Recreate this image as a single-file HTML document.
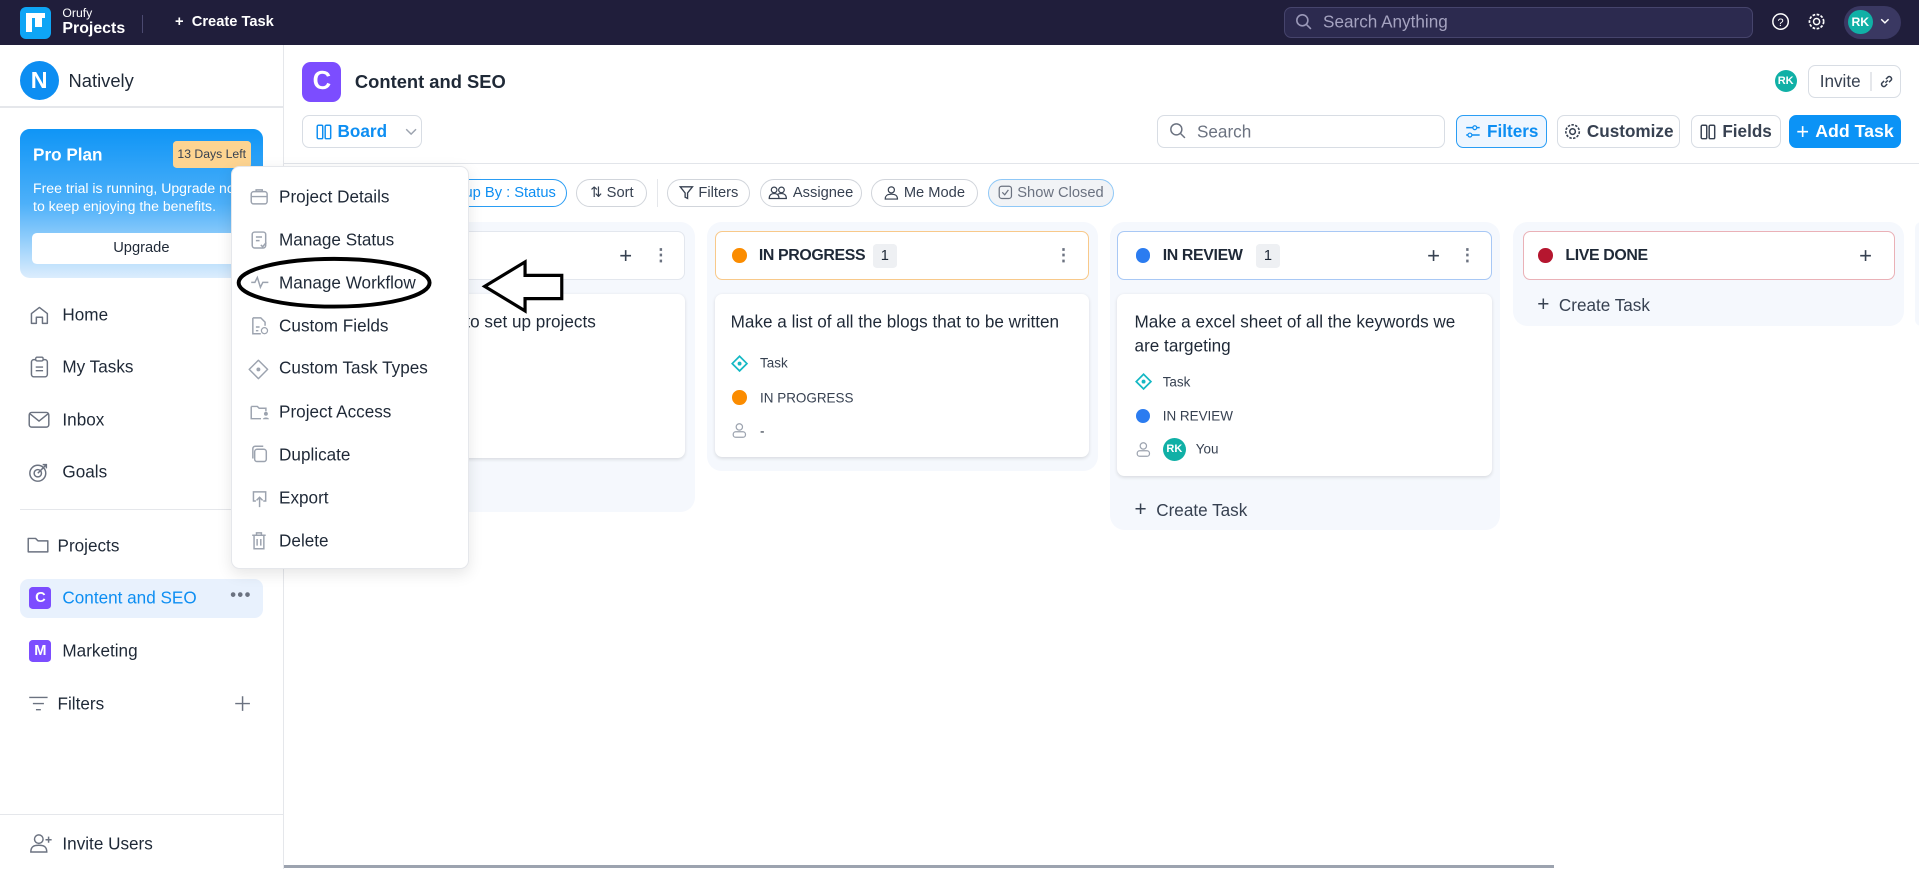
<!DOCTYPE html>
<html><head><meta charset="utf-8"><style>
*{box-sizing:border-box;margin:0;padding:0}
html,body{width:1919px;height:869px;overflow:hidden;background:#fff}
#w{zoom:1.2239;width:1568px;height:710px;position:relative;font-family:"Liberation Sans",sans-serif;color:#1f2937}
.a{position:absolute}
.t{position:absolute;white-space:nowrap;transform:translateY(-50%)}
.nav{left:0;top:0;width:1568px;height:37px;background:#201e3b}
.btn{position:absolute;border:1px solid #d8dde4;border-radius:6px;background:#fff;font-size:14px;display:flex;align-items:center;justify-content:center;gap:5px;font-weight:bold;color:#374151}
.chip{position:absolute;top:146px;height:23px;border:1px solid #d1d5db;border-radius:12px;font-size:12px;display:flex;align-items:center;justify-content:center;gap:4px;color:#374151;background:#fff}
.col{position:absolute;background:#f5f8fd;border-radius:12px;top:181px}
.hd{position:absolute;background:#fff;border-radius:6px;height:40px;top:189px;font-size:14px;font-weight:bold;color:#1f2937}
.card{position:absolute;background:#fff;border-radius:6px;box-shadow:0 1px 3px rgba(0,0,0,.12)}
.dot{position:absolute;width:12px;height:12px;border-radius:50%}
.cnt{position:absolute;background:#eef0f3;border-radius:3px;font-size:12px;width:20px;height:20px;text-align:center;line-height:20px;font-weight:normal}
.side{font-size:14px;color:#1f2937}
.mi{font-size:14px;color:#1f2937}
.hl{font-size:13px;font-weight:bold;letter-spacing:-0.3px}
svg{position:absolute;overflow:visible}
</style></head><body><div id="w">
<div class="a nav"></div>
<div class="a" style="left:16px;top:6px;width:26px;height:26px;background:#0ea5f5;border-radius:5px"></div>
<div class="a" style="left:21px;top:11px;width:16px;height:4px;background:#fff"></div>
<div class="a" style="left:21px;top:15px;width:5px;height:11px;background:#fff"></div>
<div class="a" style="left:29px;top:15px;width:5px;height:7px;background:#fff"></div>
<div class="t" style="left:51px;top:11px;font-size:10px;color:#fff">Orufy</div>
<div class="t" style="left:51px;top:24px;font-size:13px;color:#fff;font-weight:bold">Projects</div>
<div class="a" style="left:116px;top:12px;width:1px;height:15px;background:#4b4970"></div>
<div class="t" style="left:143px;top:18px;font-size:12px;color:#fff;font-weight:bold">+ &nbsp;Create Task</div>
<div class="a" style="left:1049px;top:6px;width:383px;height:25px;background:#2c2a4f;border:1px solid #46446c;border-radius:6px"></div>
<svg style="left:1058px;top:11px" width="14" height="14"><circle cx="6" cy="6" r="4.5" stroke="#9a98b8" fill="none" stroke-width="1.3"/><path d="M9.5 9.5L13 13" stroke="#9a98b8" stroke-width="1.3"/></svg>
<div class="t" style="left:1081px;top:18px;font-size:14px;color:#a5a3c0">Search Anything</div>
<svg style="left:1448px;top:11px" width="15" height="15"><circle cx="7" cy="7" r="6.3" stroke="#fff" fill="none" stroke-width="1.2"/><text x="7" y="10.5" font-size="9" fill="#fff" text-anchor="middle" font-family="Liberation Sans">?</text></svg>
<svg style="left:1477px;top:11px" width="15" height="15"><circle cx="7" cy="7" r="2.5" stroke="#fff" fill="none" stroke-width="1.2"/><circle cx="7" cy="7" r="5.8" stroke="#fff" fill="none" stroke-width="1.4" stroke-dasharray="2.2 1.2"/></svg>
<div class="a" style="left:1507px;top:5px;width:46px;height:27px;background:#3a3862;border-radius:14px"></div>
<div class="a" style="left:1510px;top:8px;width:20px;height:20px;border-radius:50%;background:#10b0a6;color:#fff;font-size:10px;font-weight:bold;text-align:center;line-height:20px">RK</div>
<svg style="left:1536px;top:15px" width="8" height="6"><path d="M1 1L4 4L7 1" stroke="#fff" fill="none" stroke-width="1.2"/></svg>

<!-- sidebar -->
<div class="a" style="left:231px;top:37px;width:1px;height:673px;background:#e5e7eb"></div>
<div class="a" style="left:16px;top:50px;width:32px;height:32px;border-radius:50%;background:#0d8ef2;color:#fff;font-weight:bold;font-size:19px;text-align:center;line-height:32px">N</div>
<div class="t side" style="left:56px;top:66px;font-size:15px">Natively</div>
<div class="a" style="left:0;top:87px;width:231px;height:1px;background:#e5e7eb"></div>
<div class="a" style="left:16px;top:105px;width:199px;height:122px;border-radius:8px;background:linear-gradient(180deg,#0f95f6 0%,#4db0f9 50%,#dcedfd 100%)"></div>
<div class="t" style="left:27px;top:127px;font-size:14px;color:#fff;font-weight:bold">Pro Plan</div>
<div class="a" style="left:141px;top:115px;width:64px;height:22px;background:#fdd491;border-radius:3px;font-size:10px;color:#374151;text-align:center;line-height:22px">13 Days Left</div>
<div class="t" style="left:27px;top:154px;font-size:11.5px;color:#fff">Free trial is running, Upgrade now</div>
<div class="t" style="left:27px;top:168px;font-size:11.5px;color:#fff">to keep enjoying the benefits.</div>
<div class="a" style="left:26px;top:190px;width:179px;height:26px;background:#fff;border-radius:4px;font-size:12px;text-align:center;line-height:26px;color:#1f2937">Upgrade</div>
<svg style="left:24px;top:249px" width="17" height="17"><path d="M2 15V7L8.5 2L15 7V15H11V10H6V15Z" stroke="#6b7280" fill="none" stroke-width="1.2" stroke-linejoin="round"/></svg>
<div class="t side" style="left:51px;top:257px">Home</div>
<svg style="left:24px;top:291px" width="17" height="18"><rect x="2" y="3" width="13" height="14" rx="2" stroke="#6b7280" fill="none" stroke-width="1.2"/><rect x="5.5" y="1" width="6" height="3" rx="1" stroke="#6b7280" fill="#fff" stroke-width="1.1"/><path d="M5.5 9H11.5M5.5 12H11.5" stroke="#6b7280" stroke-width="1.1"/></svg>
<div class="t side" style="left:51px;top:300px">My Tasks</div>
<svg style="left:23px;top:335px" width="18" height="15"><rect x="1" y="2" width="16" height="12" rx="2" stroke="#6b7280" fill="none" stroke-width="1.2"/><path d="M1.5 3L9 9L16.5 3" stroke="#6b7280" fill="none" stroke-width="1.2"/></svg>
<div class="t side" style="left:51px;top:343px">Inbox</div>
<svg style="left:23px;top:377px" width="18" height="18"><circle cx="8" cy="10" r="6.5" stroke="#6b7280" fill="none" stroke-width="1.2"/><circle cx="8" cy="10" r="3" stroke="#6b7280" fill="none" stroke-width="1.2"/><path d="M8 10L15 3M12 3H15V6" stroke="#6b7280" fill="none" stroke-width="1.2"/></svg>
<div class="t side" style="left:51px;top:386px">Goals</div>
<div class="a" style="left:16px;top:416px;width:199px;height:1px;background:#e5e7eb"></div>
<svg style="left:22px;top:438px" width="19" height="15"><path d="M1 2H7L9 4H17V13H1Z" stroke="#6b7280" fill="none" stroke-width="1.2" stroke-linejoin="round"/></svg>
<div class="t side" style="left:47px;top:446px">Projects</div>
<div class="a" style="left:16px;top:473px;width:199px;height:32px;background:#e8f1fd;border-radius:7px"></div>
<div class="a" style="left:24px;top:480px;width:18px;height:18px;background:#7c4dff;border-radius:3px;color:#fff;font-weight:bold;font-size:12px;text-align:center;line-height:18px">C</div>
<div class="t side" style="left:51px;top:489px;color:#0d8ef2">Content and SEO</div>
<div class="t" style="left:188px;top:486px;font-size:14px;color:#6b7280;letter-spacing:1px">•••</div>
<div class="a" style="left:24px;top:523px;width:18px;height:18px;background:#7c4dff;border-radius:3px;color:#fff;font-weight:bold;font-size:12px;text-align:center;line-height:18px">M</div>
<div class="t side" style="left:51px;top:532px">Marketing</div>
<svg style="left:23px;top:568px" width="17" height="14"><path d="M1 2H16M4 7H13M6.5 12H10.5" stroke="#6b7280" stroke-width="1.2"/></svg>
<div class="t side" style="left:47px;top:575px">Filters</div>
<svg style="left:191px;top:568px" width="14" height="14"><path d="M7 1V13M1 7H13" stroke="#6b7280" stroke-width="1.2"/></svg>
<div class="a" style="left:0;top:665px;width:231px;height:1px;background:#e5e7eb"></div>
<svg style="left:24px;top:681px" width="20" height="17"><circle cx="8" cy="5" r="3.5" stroke="#6b7280" fill="none" stroke-width="1.2"/><path d="M1.5 15.5C1.5 11 4 10 8 10C12 10 14.5 11 14.5 15.5Z" stroke="#6b7280" fill="none" stroke-width="1.2"/><path d="M16 3V8M13.5 5.5H18.5" stroke="#6b7280" stroke-width="1.2"/></svg>
<div class="t side" style="left:51px;top:690px">Invite Users</div>

<!-- main header -->
<div class="a" style="left:247px;top:51px;width:32px;height:32px;background:#7c4dff;border-radius:7px;color:#fff;font-weight:bold;font-size:21px;text-align:center;line-height:32px">C</div>
<div class="t" style="left:290px;top:67px;font-size:15px;font-weight:bold;color:#1f2937">Content and SEO</div>
<div class="a" style="left:1450px;top:57px;width:18px;height:18px;border-radius:50%;background:#10b0a6;color:#fff;font-size:9px;font-weight:bold;text-align:center;line-height:18px">RK</div>
<div class="btn" style="left:1477px;top:53px;width:76px;height:27px;font-weight:normal;justify-content:flex-start;padding-left:9px;font-size:14px">Invite<span style="width:1px;height:16px;background:#e5e7eb;margin-left:3px"></span><svg style="position:static" width="14" height="14"><path d="M6 8L8 6M5 6.5L3 8.5A2 2 0 0 0 5.5 11L7.5 9M6.5 5L8.5 3A2 2 0 0 1 11 5.5L9 7.5" stroke="#374151" fill="none" stroke-width="1.2"/></svg></div>

<div class="btn" style="left:247px;top:94px;width:98px;height:27px;color:#0d8ef2;justify-content:flex-start;padding-left:10px"><svg style="position:static" width="13" height="13"><rect x="1" y="1" width="4.5" height="11" rx="1" stroke="#0d8ef2" fill="none" stroke-width="1.2"/><rect x="7.5" y="1" width="4.5" height="11" rx="1" stroke="#0d8ef2" fill="none" stroke-width="1.2"/></svg>Board<svg style="position:static;margin-left:10px" width="10" height="6"><path d="M1 1L5 5L9 1" stroke="#9ca3af" fill="none" stroke-width="1.2"/></svg></div>
<div class="a" style="left:945px;top:94px;width:236px;height:27px;border:1px solid #d8dde4;border-radius:6px"></div>
<svg style="left:955px;top:100px" width="14" height="14"><circle cx="6" cy="6" r="4.5" stroke="#6b7280" fill="none" stroke-width="1.2"/><path d="M9.5 9.5L13 13" stroke="#6b7280" stroke-width="1.2"/></svg>
<div class="t" style="left:978px;top:108px;font-size:14px;color:#6b7280">Search</div>
<div class="btn" style="left:1190px;top:94px;width:74px;height:27px;background:#eef6ff;border-color:#2a9df4;color:#0d8ef2"><svg style="position:static" width="13" height="12"><path d="M1 3H12M1 9H12" stroke="#0d8ef2" stroke-width="1.2"/><circle cx="8" cy="3" r="1.6" fill="#eef6ff" stroke="#0d8ef2"/><circle cx="4" cy="9" r="1.6" fill="#eef6ff" stroke="#0d8ef2"/></svg>Filters</div>
<div class="btn" style="left:1272px;top:94px;width:101px;height:27px"><svg style="position:static" width="14" height="14"><circle cx="7" cy="7" r="2.3" stroke="#374151" fill="none" stroke-width="1.2"/><circle cx="7" cy="7" r="5.5" stroke="#374151" fill="none" stroke-width="1.3" stroke-dasharray="2 1.1"/></svg>Customize</div>
<div class="btn" style="left:1382px;top:94px;width:73px;height:27px"><svg style="position:static" width="13" height="13"><rect x="1" y="1" width="4.5" height="11" rx="1" stroke="#374151" fill="none" stroke-width="1.2"/><rect x="7.5" y="1" width="4.5" height="11" rx="1" stroke="#374151" fill="none" stroke-width="1.2"/></svg>Fields</div>
<div class="btn" style="left:1462px;top:94px;width:91px;height:27px;background:#0b93f6;border-color:#0b93f6;color:#fff;font-size:14.5px"><span style="font-size:18px;font-weight:normal">+</span>Add Task</div>
<div class="a" style="left:232px;top:133px;width:1336px;height:1px;background:#e2e5ea"></div>

<!-- chips -->
<div class="chip" style="left:340px;width:123px;border-color:#2a9df4;color:#0d8ef2;justify-content:flex-end;padding-right:8px">Group By : Status</div>
<div class="chip" style="left:471px;width:58px">⇅ Sort</div>
<div class="a" style="left:537px;top:146px;width:1px;height:23px;background:#e5e7eb"></div>
<div class="chip" style="left:545px;width:68px"><svg style="position:static" width="12" height="12"><path d="M1 1.5H11L7 6.5V11L5 10V6.5Z" stroke="#374151" fill="none" stroke-width="1.1"/></svg>Filters</div>
<div class="chip" style="left:621px;width:83px"><svg style="position:static" width="16" height="12"><circle cx="5" cy="4" r="2.3" stroke="#374151" fill="none"/><circle cx="11" cy="4" r="2.3" stroke="#374151" fill="none"/><path d="M1 11C1 8 3 7 5 7C7 7 9 8 9 11ZM8 7.5C9 7 10 7 11 7C13 7 15 8 15 11H9.5" stroke="#374151" fill="none"/></svg>Assignee</div>
<div class="chip" style="left:712px;width:87px"><svg style="position:static" width="12" height="12"><circle cx="6" cy="4" r="2.5" stroke="#374151" fill="none"/><path d="M1 11.5C1 8 3.5 7.5 6 7.5C8.5 7.5 11 8 11 11.5Z" stroke="#374151" fill="none"/></svg>Me Mode</div>
<div class="chip" style="left:807px;width:103px;border-color:#8fc8f7;background:#f1f3f6;color:#6b7280"><svg style="position:static" width="12" height="12"><rect x="1" y="1" width="10" height="10" rx="2" stroke="#6b7280" fill="none"/><path d="M3.5 6L5.5 8L8.5 4" stroke="#6b7280" fill="none"/></svg>Show Closed</div>

<!-- columns -->
<div class="col" style="left:248px;width:320px;height:237px"></div>
<div class="hd" style="left:256px;width:304px;border:1px solid #e3e7ee"></div>
<div class="t" style="left:506px;top:209px;font-size:18px;color:#374151">+</div>
<div class="t" style="left:533px;top:208px;font-size:14px;color:#6b7280;font-weight:bold">⋮</div>
<div class="card" style="left:256px;top:240px;width:304px;height:134px"></div>
<div class="t" style="left:311px;top:263px;font-size:14px;color:#1f2937">Learn how to set up projects</div>

<div class="col" style="left:578px;width:319px;height:204px"></div>
<div class="hd" style="left:584px;width:306px;border:1px solid #f8c98a"></div>
<div class="dot" style="left:598px;top:203px;background:#fb8c00"></div>
<div class="t hl" style="left:620px;top:209px">IN PROGRESS</div>
<div class="cnt" style="left:713px;top:199px">1</div>
<div class="t" style="left:862px;top:208px;font-size:14px;color:#6b7280;font-weight:bold">⋮</div>
<div class="card" style="left:584px;top:240px;width:306px;height:133px"></div>
<div class="t" style="left:597px;top:263px;font-size:14px">Make a list of all the blogs that to be written</div>
<svg style="left:597px;top:290px" width="14" height="14"><path d="M7 1L13 7L7 13L1 7Z" stroke="#14b8c4" fill="none" stroke-width="1.4"/><circle cx="7" cy="7" r="1.6" fill="#14b8c4"/></svg>
<div class="t" style="left:621px;top:297px;font-size:11px;color:#374151">Task</div>
<div class="dot" style="left:598px;top:319px;background:#fb8c00"></div>
<div class="t" style="left:621px;top:325px;font-size:11px;color:#374151">IN PROGRESS</div>
<svg style="left:598px;top:345px" width="12" height="14"><circle cx="6" cy="4" r="2.6" stroke="#9ca3af" fill="none"/><rect x="1" y="8" width="10" height="4.5" rx="2" stroke="#9ca3af" fill="none"/></svg>
<div class="t" style="left:621px;top:352px;font-size:11px">-</div>

<div class="col" style="left:907px;width:319px;height:252px"></div>
<div class="hd" style="left:913px;width:306px;border:1px solid #a8c8f5"></div>
<div class="dot" style="left:928px;top:203px;background:#2b7cf0"></div>
<div class="t hl" style="left:950px;top:209px">IN REVIEW</div>
<div class="cnt" style="left:1026px;top:199px">1</div>
<div class="t" style="left:1166px;top:209px;font-size:18px;color:#374151">+</div>
<div class="t" style="left:1192px;top:208px;font-size:14px;color:#6b7280;font-weight:bold">⋮</div>
<div class="card" style="left:913px;top:240px;width:306px;height:149px"></div>
<div class="t" style="left:927px;top:263px;font-size:14px">Make a excel sheet of all the keywords we</div>
<div class="t" style="left:927px;top:283px;font-size:14px">are targeting</div>
<svg style="left:927px;top:305px" width="14" height="14"><path d="M7 1L13 7L7 13L1 7Z" stroke="#14b8c4" fill="none" stroke-width="1.4"/><circle cx="7" cy="7" r="1.6" fill="#14b8c4"/></svg>
<div class="t" style="left:950px;top:312px;font-size:11px;color:#374151">Task</div>
<div class="dot" style="left:928px;top:334px;background:#2b7cf0"></div>
<div class="t" style="left:950px;top:340px;font-size:11px;color:#374151">IN REVIEW</div>
<svg style="left:928px;top:360px" width="12" height="14"><circle cx="6" cy="4" r="2.6" stroke="#9ca3af" fill="none"/><rect x="1" y="8" width="10" height="4.5" rx="2" stroke="#9ca3af" fill="none"/></svg>
<div class="a" style="left:950px;top:358px;width:19px;height:19px;border-radius:50%;background:#10b0a6;color:#fff;font-size:9px;font-weight:bold;text-align:center;line-height:19px">RK</div>
<div class="t" style="left:977px;top:367px;font-size:11px;color:#374151">You</div>
<div class="t" style="left:927px;top:417px;font-size:14px;color:#374151"><span style="font-size:17px">+</span>&nbsp; Create Task</div>

<div class="col" style="left:1236px;width:320px;height:85px"></div>
<div class="hd" style="left:1244px;width:304px;border:1px solid #eab1b7"></div>
<div class="dot" style="left:1257px;top:203px;background:#b5162f"></div>
<div class="t hl" style="left:1279px;top:209px">LIVE DONE</div>
<div class="t" style="left:1519px;top:209px;font-size:18px;color:#374151">+</div>
<div class="t" style="left:1256px;top:249px;font-size:14px;color:#374151"><span style="font-size:17px">+</span>&nbsp; Create Task</div>
<div class="col" style="left:1565px;width:10px;height:85px"></div>
<div class="a" style="left:232px;top:707px;width:1038px;height:2px;background:#9ca3af"></div>

<!-- menu -->
<div class="a" style="left:189px;top:136px;width:194px;height:329px;background:#fff;border:1px solid #e5e7eb;border-radius:7px;box-shadow:0 4px 12px rgba(0,0,0,.1)"></div>
<svg style="left:204px;top:154px" width="16" height="14"><rect x="1" y="3" width="13" height="10" rx="2" stroke="#9ca3af" fill="none" stroke-width="1.2"/><path d="M5 3V1.5H10V3M1 7H14" stroke="#9ca3af" fill="none" stroke-width="1.2"/></svg>
<div class="t mi" style="left:228px;top:161px">Project Details</div>
<svg style="left:205px;top:187px" width="14" height="17"><rect x="1" y="2.5" width="11" height="13" rx="2" stroke="#9ca3af" fill="none" stroke-width="1.2"/><path d="M4 6.5H9M4 9.5H7M8 13L9.5 14.5L12.5 11" stroke="#9ca3af" fill="none" stroke-width="1.2"/></svg>
<div class="t mi" style="left:228px;top:196px">Manage Status</div>
<svg style="left:204px;top:225px" width="16" height="12"><path d="M1 6H4L6 2L8.5 10L10.5 6H15" stroke="#9ca3af" fill="none" stroke-width="1.2"/></svg>
<div class="t mi" style="left:228px;top:231px">Manage Workflow</div>
<svg style="left:205px;top:258px" width="15" height="16"><path d="M1.5 1.5H8L11.5 5V8M1.5 1.5V14.5H8" stroke="#9ca3af" fill="none" stroke-width="1.2"/><path d="M4 9H7M4 12H6" stroke="#9ca3af" stroke-width="1.2"/><circle cx="11" cy="12" r="2.5" stroke="#9ca3af" fill="none"/></svg>
<div class="t mi" style="left:228px;top:266px">Custom Fields</div>
<svg style="left:203px;top:293px" width="17" height="17"><path d="M8.5 1L16 8.5L8.5 16L1 8.5Z" stroke="#9ca3af" fill="none" stroke-width="1.2" stroke-linejoin="round"/><circle cx="8.5" cy="8.5" r="1.6" fill="#9ca3af"/></svg>
<div class="t mi" style="left:228px;top:301px">Custom Task Types</div>
<svg style="left:204px;top:330px" width="17" height="14"><path d="M1 2H6L7.5 3.5H13V6M1 2V12H9" stroke="#9ca3af" fill="none" stroke-width="1.2"/><circle cx="13" cy="8" r="1.6" fill="#9ca3af"/><path d="M10.5 12.5C10.5 10.5 15.5 10.5 15.5 12.5Z" fill="#9ca3af"/></svg>
<div class="t mi" style="left:228px;top:337px">Project Access</div>
<svg style="left:205px;top:364px" width="14" height="15"><rect x="3" y="3.5" width="9.5" height="10" rx="2" stroke="#9ca3af" fill="none" stroke-width="1.2"/><path d="M1.5 11V3A2 2 0 0 1 3.5 1H10" stroke="#9ca3af" fill="none" stroke-width="1.2"/></svg>
<div class="t mi" style="left:228px;top:372px">Duplicate</div>
<svg style="left:205px;top:400px" width="14" height="15"><path d="M4 9H2V1.5H12V9H10M7 14V6M4.5 8.5L7 6L9.5 8.5" stroke="#9ca3af" fill="none" stroke-width="1.2"/></svg>
<div class="t mi" style="left:228px;top:407px">Export</div>
<svg style="left:205px;top:434px" width="13" height="16"><path d="M1 3.5H12M4.5 3.5V1.5H8.5V3.5M2.5 3.5V14.5H10.5V3.5M5 6.5V12M8 6.5V12" stroke="#9ca3af" fill="none" stroke-width="1.2"/></svg>
<div class="t mi" style="left:228px;top:442px">Delete</div>

<!-- annotation -->
<svg style="left:0;top:0" width="1568" height="710"><ellipse cx="273" cy="231" rx="78" ry="19.5" stroke="#000" fill="none" stroke-width="3.2"/><path d="M396 234L429 214V225H459V244H429V254Z" stroke="#000" fill="#fff" stroke-width="2.6" stroke-linejoin="miter"/></svg>
</div></body></html>
